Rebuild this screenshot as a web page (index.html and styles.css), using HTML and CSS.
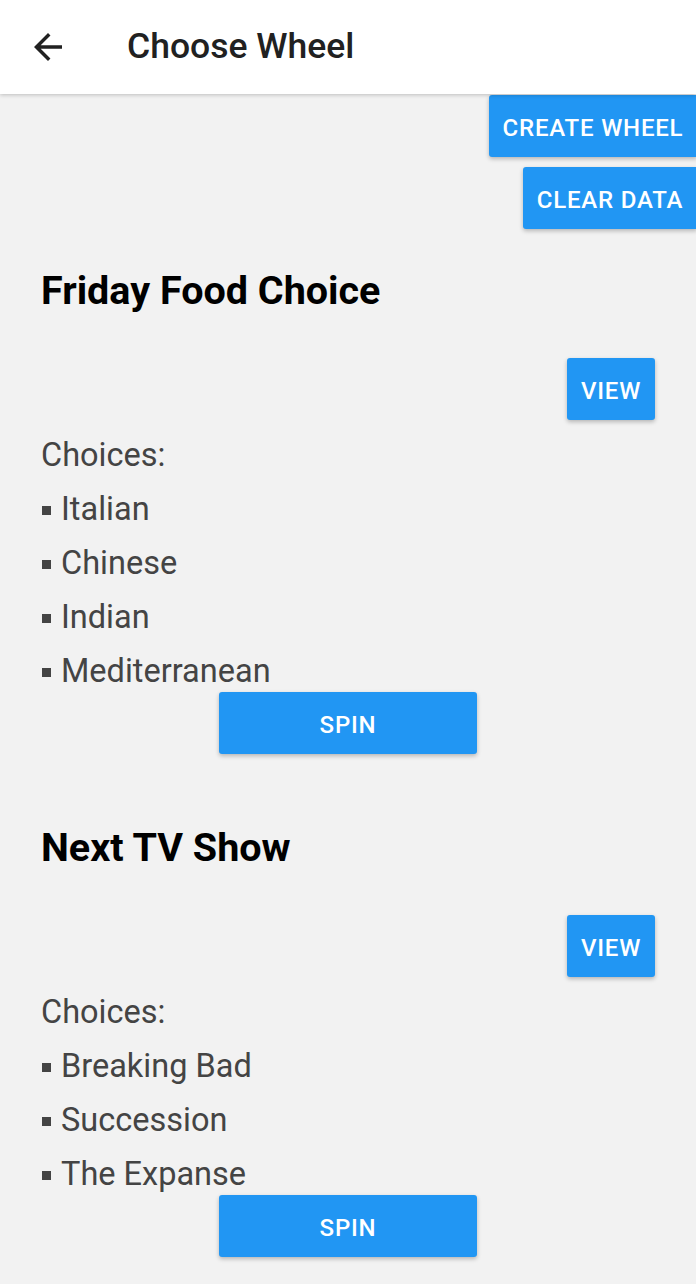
FILE: index.html
```html
<!DOCTYPE html>
<html>
<head>
<meta charset="utf-8">
<link rel="stylesheet" href="styles.css">
</head>
<body>
<header class="appbar">
  <svg class="back" viewBox="0 0 24 24" width="42" height="42"><path d="M20 11H7.83l5.59-5.59L12 4l-8 8 8 8 1.41-1.41L7.83 13H20v-2z" fill="#212121"/></svg>
  <h1 class="title">Choose Wheel</h1>
</header>
<div class="actions">
  <button class="btn btn-create">CREATE WHEEL</button>
  <button class="btn btn-clear">CLEAR DATA</button>
</div>
<section class="wheel">
  <h2 class="wheel-name">Friday Food Choice</h2>
  <div class="view-row"><button class="btn btn-view">VIEW</button></div>
  <p class="choices-label">Choices:</p>
  <ul class="choices">
    <li>Italian</li>
    <li>Chinese</li>
    <li>Indian</li>
    <li>Mediterranean</li>
  </ul>
  <div class="spin-row"><button class="btn btn-spin">SPIN</button></div>
</section>
<section class="wheel">
  <h2 class="wheel-name">Next TV Show</h2>
  <div class="view-row"><button class="btn btn-view">VIEW</button></div>
  <p class="choices-label">Choices:</p>
  <ul class="choices">
    <li>Breaking Bad</li>
    <li>Succession</li>
    <li>The Expanse</li>
  </ul>
  <div class="spin-row"><button class="btn btn-spin">SPIN</button></div>
</section>
</body>
</html>
```
FILE: styles.css
```css
html, body {
  margin: 0;
  padding: 0;
}
body {
  background: #f2f2f2;
  font-family: Roboto, "Noto Sans", sans-serif;
  width: 696px;
  height: 1284px;
  overflow: hidden;
}
.appbar {
  position: relative;
  z-index: 1;
  height: 94px;
  background: #fff;
  box-shadow: 0 1px 4px rgba(0,0,0,0.22);
  display: flex;
  align-items: center;
}
.back {
  margin-left: 27px;
  flex: none;
}
.title {
  margin: 0 0 0 58px;
  font-size: 35.5px;
  font-weight: 500;
  color: #212121;
  line-height: 1;
}
.btn {
  border: none;
  background: #2196f3;
  color: #fff;
  font-family: Roboto, sans-serif;
  font-weight: 500;
  font-size: 24px;
  letter-spacing: 0.8px;
  height: 62px;
  padding: 3px 0 0;
  border-radius: 3px;
  box-shadow: 0 2px 4px rgba(0,0,0,0.25);
}
.actions {
  display: flex;
  flex-direction: column;
  align-items: flex-end;
  gap: 10px;
  padding-top: 1px;
}
.btn-create {
  width: 208px;
  margin-right: -1px;
  border-radius: 3px 0 0 3px;
}
.btn-clear {
  width: 174px;
  margin-right: -1px;
  border-radius: 3px 0 0 3px;
}
.wheel {
  padding: 38px 41px 70px;
}
.wheel + .wheel {
  padding-top: 0;
}
.wheel-name {
  margin: 0;
  font-size: 39.5px;
  font-weight: 700;
  line-height: 48px;
  color: #000;
}
.view-row {
  display: flex;
  justify-content: flex-end;
  margin-top: 43px;
}
.btn-view {
  width: 88px;
}
.choices-label {
  margin: 8px 0 0;
  font-size: 32.5px;
  line-height: 54px;
  color: #444;
}
.choices {
  list-style: none;
  margin: 0;
  padding: 0;
}
.choices li {
  font-size: 32.5px;
  line-height: 54px;
  color: #444;
  display: flex;
  align-items: center;
}
.choices li::before {
  content: "";
  width: 9px;
  height: 9px;
  background: #444;
  margin: 2px 10px 0 1px;
  flex: none;
}
.spin-row {
  display: flex;
  justify-content: center;
  margin-top: -6px;
}
.btn-spin {
  width: 258px;
}
```
